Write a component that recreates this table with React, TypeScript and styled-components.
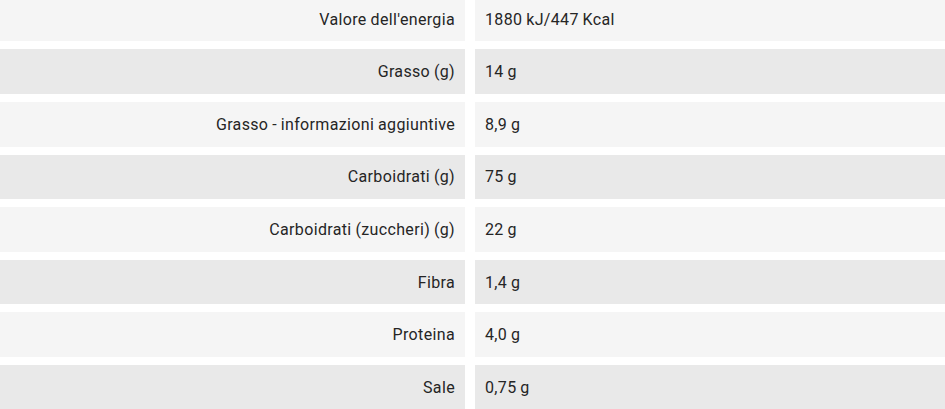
import * as React from 'react';
import styled, { createGlobalStyle } from 'styled-components';

const rows = [
  { label: "Valore dell'energia", value: '1880 kJ/447 Kcal' },
  { label: 'Grasso (g)', value: '14 g' },
  { label: 'Grasso - informazioni aggiuntive', value: '8,9 g' },
  { label: 'Carboidrati (g)', value: '75 g' },
  { label: 'Carboidrati (zuccheri) (g)', value: '22 g' },
  { label: 'Fibra', value: '1,4 g' },
  { label: 'Proteina', value: '4,0 g' },
  { label: 'Sale', value: '0,75 g' },
];

export default () => {
  return (
    <>
      <GlobalStyle />
      <Table>
        {rows.map((row, i) => (
          <React.Fragment key={row.label}>
            <LabelCell $shade={i % 2 === 1}>{row.label}</LabelCell>
            <ValueCell $shade={i % 2 === 1}>{row.value}</ValueCell>
          </React.Fragment>
        ))}
      </Table>
    </>
  );
};

const GlobalStyle = createGlobalStyle`
  body {
    margin: 0;
    background: #fff;
    font-family: Roboto, "Liberation Sans", sans-serif;
    overflow: hidden;
  }
`;

const Table = styled.div`
  display: grid;
  grid-template-columns: 465px 1fr;
  grid-auto-rows: 44.6px;
  column-gap: 10px;
  row-gap: 8px;
  margin-top: -3.2px;
  width: 945px;
`;

const Cell = styled.div<{ $shade: boolean }>`
  display: flex;
  align-items: center;
  padding: 0 10px;
  background: ${(p) => (p.$shade ? '#e9e9e9' : '#f5f5f5')};
  color: #252525;
  font-size: 16px;
  letter-spacing: 0.35px;
  word-spacing: -0.5px;
`;

const LabelCell = styled(Cell)`
  justify-content: flex-end;
  text-align: right;
`;

const ValueCell = styled(Cell)`
  justify-content: flex-start;
`;
